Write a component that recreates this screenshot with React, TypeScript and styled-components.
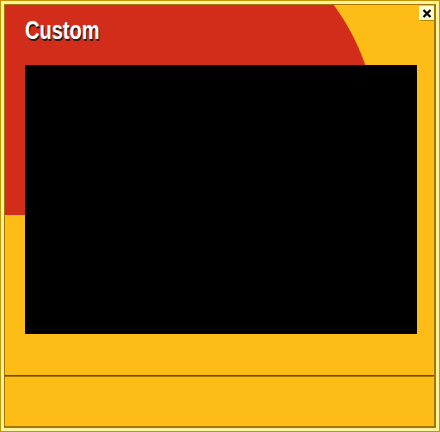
import styled, { createGlobalStyle } from "styled-components";

const Global = createGlobalStyle`
  html, body {
    margin: 0;
    padding: 0;
    background: #ffffff;
  }
  * { box-sizing: border-box; }
`;

const Window = styled.div`
  width: 440px;
  height: 432px;
  border: 1px solid #c89400;
  background: #fff3a0;
  padding: 3px;
`;

const Frame = styled.div`
  position: relative;
  height: 100%;
  display: flex;
  flex-direction: column;
  background: #fdbd16;
  border-style: solid;
  border-color: #a37800;
  border-width: 1px 2px 2px 1px;
  overflow: hidden;
`;

// red disc behind the header, cut off flat at its lower edge
const Decor = styled.div`
  position: absolute;
  top: 0;
  left: 0;
  width: 100%;
  height: 210px;
  overflow: hidden;
  &::before {
    content: "";
    position: absolute;
    left: -83px;
    top: -93px;
    width: 456px;
    height: 456px;
    border-radius: 50%;
    background: #d22c1b;
  }
`;

const Header = styled.div`
  position: relative;
  height: 60px;
  padding: 12px 20px 0;
`;

const Title = styled.h1`
  margin: 0;
  display: inline-block;
  font-family: "Liberation Sans", Arial, sans-serif;
  font-weight: 700;
  font-size: 25px;
  line-height: 26px;
  color: #ffffff;
  text-shadow: 1px 2px 0 #2a1a10;
  transform: scaleX(0.8);
  transform-origin: left center;
`;

const Body = styled.div`
  position: relative;
  flex: 1;
  padding: 0 17px 41px 20px;
`;

const Screen = styled.div`
  width: 392px;
  height: 269px;
  background: #000000;
`;

const Footer = styled.div`
  height: 51px;
  border-top: 1px solid #6b4c00;
  box-shadow: inset 0 1px 0 #a37800;
`;

const Close = styled.button`
  position: absolute;
  top: 1px;
  right: 0;
  width: 15px;
  height: 14px;
  padding: 0;
  border: none;
  background: #fffbd2;
  box-shadow: 1px 1px 0 #b58a00;
  display: flex;
  align-items: center;
  justify-content: center;
  cursor: pointer;
`;

export default function App() {
  return (
    <>
      <Global />
      <Window>
        <Frame>
          <Decor />
          <Header>
            <Title>Custom</Title>
          </Header>
          <Body>
            <Screen />
          </Body>
          <Footer />
          <Close aria-label="Close">
            <svg width="10" height="9" viewBox="0 0 10 9">
              <path d="M1.5 1 L8.5 8 M8.5 1 L1.5 8" stroke="#000" strokeWidth="2.2" />
            </svg>
          </Close>
        </Frame>
      </Window>
    </>
  );
}
